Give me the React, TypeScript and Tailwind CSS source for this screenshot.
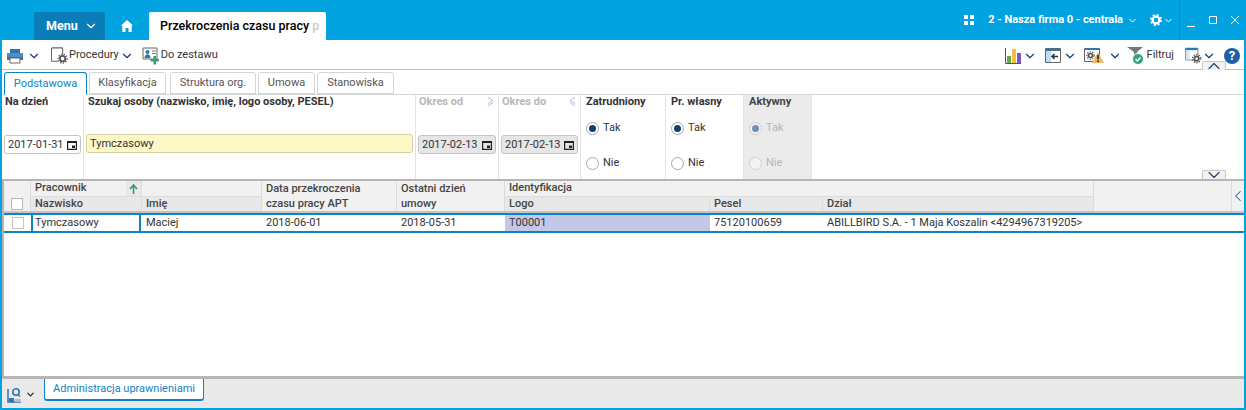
import React from "react";
import { ChevronDown, ChevronUp, ChevronLeft } from "lucide-react";

const Chev = ({ c = "text-[#1a3f6f]" }: { c?: string }) => <ChevronDown size={14} strokeWidth={2} className={`shrink-0 ${c}`} />;

const Thin = () => (
  <svg width="7" height="5" viewBox="0 0 7 5" className="shrink-0">
    <path d="M.5 1l3 3 3-3" fill="none" stroke="#fff" strokeWidth="1" />
  </svg>
);

const Cal = () => (
  <svg width="10" height="10" viewBox="0 0 10 10" className="shrink-0">
    <path d="M.6 1.500h8.800v7.900H.6z" fill="none" stroke="#222" strokeWidth="1.200" />
    <path d="M.5 1h9v2H.5z" fill="#222" />
    <path d="M5 5.500h3V8H5z" fill="#222" />
  </svg>
);

const DateBox = ({ v, off }: { v: string; off?: boolean }) => (
  <div className={`flex items-center justify-between h-[19px] rounded-[3px] border border-[#c4c4c4] pl-[3px] pr-[3px] text-[11px] whitespace-nowrap text-[#333] ${off ? "bg-[#e6e6e6]" : "bg-white"}`}>
    <span className="pt-px">{v}</span>
    <Cal />
  </div>
);

const Radio = ({ label, on, off }: { label: string; on?: boolean; off?: boolean }) => (
  <div className={`flex items-center h-[14px] gap-[4px] text-[11px] ${off ? "text-[#b5b5b5]" : "text-[#333]"}`}>
    <span className={`w-[13px] h-[13px] rounded-full border flex items-center justify-center ${off ? "border-[#d0d0d0] bg-[#f2f2f2]" : "border-[#a8a8a8] bg-white"}`}>
      {on && <span className={`w-[7px] h-[7px] rounded-full ${off ? "bg-[#6f8fb5]" : "bg-[#123f73]"}`} />}
    </span>
    {label}
  </div>
);

const Tab = ({ label, active, w, ml }: { label: string; active?: boolean; w: string; ml?: string }) => (
  <div className={`flex items-center justify-center pt-px rounded-t-[3px] border text-[11px] ${w} ${ml ?? ""} ${active ? "h-[23px] relative z-10 -mb-px border-[#0a84c6] border-b-white text-[#0a84c6] bg-white" : "h-[22px] border-[#d5d5d5] text-[#555] bg-white"}`}>
    {label}
  </div>
);

const RadioCol = ({ title, w, off }: { title: string; w: string; off?: boolean }) => (
  <div className={`${w} h-full border-r border-[#e3e3e3] pl-[5px] flex flex-col ${off ? "bg-[#ebebeb]" : ""}`}>
    <div className={`leading-[14px] h-[14px] font-bold ${off ? "text-[#444]" : "text-[#333]"}`}>{title}</div>
    <div className="mt-[12px]"><Radio label="Tak" on off={off} /></div>
    <div className="mt-[21px]"><Radio label="Nie" off={off} /></div>
  </div>
);

const Hd = ({ w, top, bottom, bg, arrow }: { w: string; top?: string; bottom?: string; bg?: string; arrow?: boolean }) => (
  <div className={`${w} shrink-0 border-r border-[#dcdcdc] flex flex-col text-[11px] font-medium text-[#444]`}>
    <div className="h-[16px] pl-[4px] flex items-center justify-between border-b border-[#dcdcdc]">
      <span>{top}</span>
      {arrow && (
        <span className="w-[15px] h-full bg-[#e8e8e8] flex items-center justify-center">
          <svg width="9" height="10" viewBox="0 0 9 10"><path d="M4.5 10V2M1 5l3.5-4L8 5" fill="none" stroke="#2a9d6b" strokeWidth="1.6" /></svg>
        </span>
      )}
    </div>
    <div className={`h-[14px] pl-[4px] pt-px flex items-center ${bg ?? ""}`}>{bottom}</div>
  </div>
);

const Cell = ({ w, children, bg }: { w: string; children?: React.ReactNode; bg?: string }) => (
  <div className={`${w} shrink-0 h-full flex items-center pl-[4px] pt-px whitespace-nowrap ${bg ?? ""}`}>{children}</div>
);

const Lbl = ({ children, right }: { children: React.ReactNode; right?: boolean }) => (
  <div className="flex justify-between items-center font-bold text-[#b8b8b8] h-[14px] leading-[14px]">
    <span>{children}</span>
    <svg width="7" height="10" viewBox="0 0 7 10" className="shrink-0">
      <path d={right ? "M6 .5 1 3.500 6 6.500" : "M1 .5 6 3.500 1 6.500"} fill="none" stroke="#a7bdd6" strokeWidth="1" />
      <path d={right ? "M1 5.500 6 9" : "M6 5.500 1 9"} fill="none" stroke="#a7bdd6" strokeWidth="1" />
    </svg>
  </div>
);

export default function App() {
  return (
    <div className="w-[1246px] h-[410px] overflow-hidden flex flex-col bg-white font-['Roboto',sans-serif] text-[#333]">
      <div className="h-[40px] shrink-0 bg-[#00a3e0] flex items-end pl-[34px] text-white">
        <div className="w-[71px] h-[28px] rounded-t-[2px] bg-[#0a7cb8] flex items-center pl-[12px] gap-[6px] text-[12.5px] font-bold">
          Menu <ChevronDown size={14} strokeWidth={2} />
        </div>
        <div className="w-[44px] h-[28px] flex items-center justify-center">
          <svg width="12" height="12" viewBox="0 0 12 12"><path d="M6 0l6 5.500h-1.300V12H7.500V8h-3v4H1.300V5.500H0z" fill="#fff" /></svg>
        </div>
        <div className="w-[177px] h-[28px] rounded-t-[2px] bg-white text-black text-[12.5px] font-medium flex items-center pl-[11px] overflow-hidden whitespace-nowrap">
          Przekroczenia czasu pracy <span className="ml-[3px] text-[#ccc]">p</span>
        </div>
        <div className="ml-auto h-[40px] flex items-center text-[11px] font-bold">
          <svg width="10" height="10" viewBox="0 0 10 10" className="mr-[14px]">
            <path d="M0 0h4v4H0zM6 0h4v4H6zM0 6h4v4H0zM6 6h4v4H6z" fill="#fff" />
          </svg>
          <span className="mr-[6px] whitespace-nowrap">2 - Nasza firma 0 - centrala</span>
          <span className="mr-[14px]"><Thin /></span>
          <svg width="12" height="12" viewBox="0 0 12 12" className="mr-[3px]">
            <circle cx="6" cy="6" r="3.400" fill="none" stroke="#fff" strokeWidth="2.200" />
            <circle cx="6" cy="6" r="5" fill="none" stroke="#fff" strokeWidth="2" strokeDasharray="2 1.930" />
          </svg>
          <span className="mr-[7px]"><Thin /></span>
          <div className="h-full border-l border-[#0a8fc6] pl-[7px] pr-[7px] flex items-center gap-[14px]">
            <svg width="8" height="8" viewBox="0 0 8 8" className="translate-y-[3px]"><path d="M0 7.500h8" stroke="#fff" strokeWidth="1" /></svg>
            <svg width="8" height="8" viewBox="0 0 8 8"><path d="M.5.500h7v7h-7z" fill="none" stroke="#fff" strokeWidth="1" /></svg>
            <svg width="8" height="8" viewBox="0 0 8 8"><path d="M0 0l8 8M8 0L0 8" stroke="#fff" strokeWidth="1" /></svg>
          </div>
        </div>
      </div>

      <div className="flex-1 flex flex-col border-l-2 border-r-2 border-b-2 border-l-[#00a3e0] border-r-[#00a3e0] border-b-[#00a3e0] min-h-0">
        <div className="h-[30px] shrink-0 border-b border-[#c0c0c0] flex items-center pt-[2px] pl-[4px] pr-[4px] text-[11px] text-[#333]">
          <svg width="18" height="16" viewBox="0 0 18 16" className="mr-[3px]">
            <path d="M4 1h10v4H4z" fill="#2e75b6" />
            <path d="M1 5h16v7H1z" fill="#4a8fc9" />
            <path d="M1 9h16v3H1z" fill="#5e6a75" />
            <path d="M4 10h10v5H4z" fill="#fff" stroke="#666" />
          </svg>
          <Chev />
          <svg width="17" height="17" viewBox="0 0 19 19" className="ml-[10px]">
            <path d="M8 16H1.500a1 1 0 0 1-1-1V2a1 1 0 0 1 1-1H12a1 1 0 0 1 1 1v6" fill="none" stroke="#666" strokeWidth="1.200" />
            <circle cx="13" cy="13" r="3" fill="none" stroke="#555" strokeWidth="2" />
            <circle cx="13" cy="13" r="5" fill="none" stroke="#555" strokeWidth="1.400" strokeDasharray="1.500 1.500" />
          </svg>
          <span className="ml-px mr-px">Procedury</span>
          <Chev />
          <svg width="18" height="18" viewBox="0 0 18 18" className="ml-[8px] mr-px">
            <path d="M1 1h14v11H1z" fill="#fff" stroke="#666" />
            <circle cx="5.500" cy="5" r="2" fill="#2e75b6" />
            <path d="M2.500 11c0-5 6-5 6 0z" fill="#2e75b6" />
            <path d="M10 4h4M10 6.500h4" stroke="#777" />
            <path d="M11.500 9h2.500v3h3v2.500h-3v3h-2.500v-3h-3V12h3z" fill="#2fa37c" />
          </svg>
          <span>Do zestawu</span>

          <div className="ml-auto flex items-center">
            <svg width="17" height="16" viewBox="0 0 17 16" className="mr-px">
              <path d="M.5 0v15.500H16" fill="none" stroke="#555" />
              <path d="M2 8h4v7H2z" fill="#6aa84f" />
              <path d="M7 1h4v14H7z" fill="#f1c232" />
              <path d="M12 5h4v10h-4z" fill="#7e57c2" />
            </svg>
            <Chev />
            <svg width="16" height="15" viewBox="0 0 16 15" className="ml-[8px] mr-[2px]">
              <path d="M.5.500h15v14H.5z" fill="#fff" stroke="#666" />
              <path d="M1 1h5v13H1z" fill="#bcdcf3" />
              <path d="M1 1h14v2H1z" fill="#2e75b6" />
              <path d="M13 8.500H7M9.500 6 7 8.500 9.500 11" fill="none" stroke="#333" strokeWidth="1.600" />
            </svg>
            <Chev />
            <svg width="21" height="17" viewBox="0 0 21 17" className="ml-[7px] mr-[3px]">
              <path d="M.5 1.500h15v13H.5z" fill="#fff" stroke="#666" />
              <path d="M1 1h14v2H1z" fill="#2e75b6" />
              <circle cx="6.500" cy="8.500" r="2" fill="none" stroke="#555" strokeWidth="1.600" />
              <circle cx="6.500" cy="8.500" r="3.600" fill="none" stroke="#555" strokeWidth="1.200" strokeDasharray="1.300 1.300" />
              <path d="M14 5l6 11H8z" fill="#f0b767" />
              <path d="M14 8v4.500M14 13.500v1.500" stroke="#222" strokeWidth="1.600" />
            </svg>
            <Chev />
            <svg width="19" height="20" viewBox="0 0 19 20" className="ml-[5px]">
              <path d="M0 1h16l-6 5v5H7V6z" fill="#777" />
              <circle cx="11" cy="13" r="5.500" fill="#2fa37c" stroke="#fff" />
              <path d="M8.500 13l2 2 3-3.500" fill="none" stroke="#fff" strokeWidth="1.500" />
            </svg>
            <span className="ml-[1px]">Filtruj</span>
            <svg width="17" height="19" viewBox="0 0 19 19" className="ml-[11px]">
              <path d="M.5 1.500h14v13H.5z" fill="#fff" stroke="#777" />
              <path d="M1 1h13v2.500H1z" fill="#2e75b6" />
              <path d="M1 4h4v10H1z" fill="#d5e6f5" />
              <circle cx="13" cy="13" r="2.500" fill="#fff" stroke="#555" strokeWidth="2" />
              <circle cx="13" cy="13" r="4.700" fill="none" stroke="#555" strokeWidth="1.400" strokeDasharray="1.500 1.500" />
            </svg>
            <Chev />
            <span className="ml-[8px] w-[16px] h-[16px] rounded-full bg-[#1f5fa8] text-white text-[13px] font-bold flex items-center justify-center">?</span>
          </div>
        </div>

        <div className="h-[24px] shrink-0 flex items-end pl-[2px] relative">
          <Tab label="Podstawowa" active w="w-[83px]" />
          <Tab label="Klasyfikacja" w="w-[77px]" ml="ml-[2px]" />
          <Tab label="Struktura org." w="w-[86px]" ml="ml-[4px]" />
          <Tab label="Umowa" w="w-[57px]" ml="ml-[2px]" />
          <Tab label="Stanowiska" w="w-[77px]" ml="ml-[2px]" />
          <div className="absolute right-[18px] top-[-9px] w-[24px] h-[9px] bg-[#f2f2f2] border border-b-0 border-[#c8c8c8] rounded-t-[2px] flex items-center justify-center">
            <ChevronUp size={20} strokeWidth={1.300} className="shrink-0 text-[#1a3f6f]" />
          </div>
        </div>

        <div className="h-[85px] shrink-0 border-t border-[#d5d5d5] flex text-[11px] relative">
          <div className="w-[82px] h-full border-r border-[#e3e3e3] px-[2px] flex flex-col">
            <div className="font-bold h-[14px] leading-[14px] pl-px">Na dzień</div>
            <div className="mt-[26px]"><DateBox v="2017-01-31" /></div>
          </div>
          <div className="w-[332px] h-full border-r border-[#e3e3e3] px-[2px] flex flex-col">
            <div className="h-[14px] leading-[14px] font-bold pl-[2px]">Szukaj osoby (nazwisko, imię, logo osoby, PESEL)</div>
            <div className="mt-[25px] h-[19px] bg-[#fdf8c8] border border-[#d5d0a0] rounded-[3px] pl-[3px] pt-px flex items-center">Tymczasowy</div>
          </div>
          <div className="w-[83px] h-full border-r border-[#e3e3e3] px-[2px] flex flex-col">
            <div className="pl-px pr-[2px]"><Lbl>Okres od</Lbl></div>
            <div className="mt-[26px]"><DateBox v="2017-02-13" off /></div>
          </div>
          <div className="w-[82px] h-full border-r border-[#e3e3e3] px-[2px] flex flex-col">
            <div className="pl-px pr-[2px]"><Lbl right>Okres do</Lbl></div>
            <div className="mt-[26px]"><DateBox v="2017-02-13" off /></div>
          </div>
          <RadioCol title="Zatrudniony" w="w-[85px]" />
          <RadioCol title="Pr. własny" w="w-[78px]" />
          <RadioCol title="Aktywny" w="w-[68px]" off />
          <div className="absolute right-[18px] bottom-0 w-[24px] h-[9px] bg-[#f2f2f2] border border-b-0 border-[#c8c8c8] rounded-t-[2px] flex items-center justify-center">
            <ChevronDown size={20} strokeWidth={1.300} className="shrink-0 text-[#1a3f6f]" />
          </div>
        </div>

        <div className="flex-1 min-h-0 flex flex-col border-t-2 border-b-[3px] border-l-2 border-[#b5b5b5]">
          <div className="h-[32px] shrink-0 bg-[#f1f1f1] border-b-2 border-[#c4c4c4] flex">
            <div className="w-[27px] shrink-0 border-r border-[#dcdcdc] flex items-end justify-center pb-[1px]">
              <span className="w-[12px] h-[12px] border border-[#b5b5b5] bg-white" />
            </div>
            <Hd w="w-[111px]" top="Pracownik" bottom="Nazwisko" arrow bg="bg-[#e8e8e8]" />
            <Hd w="w-[120px]" bottom="Imię" bg="bg-[#e8e8e8]" />
            <div className="w-[135px] shrink-0 border-r border-[#dcdcdc] flex flex-col text-[11px] font-medium text-[#444]">
              <div className="h-[16px] pl-[4px] flex items-center">Data przekroczenia</div>
              <div className="h-[14px] pl-[4px] pt-px flex items-center">czasu pracy APT</div>
            </div>
            <div className="w-[108px] shrink-0 border-r border-[#dcdcdc] flex flex-col text-[11px] font-medium text-[#444]">
              <div className="h-[16px] pl-[4px] flex items-center">Ostatni dzień</div>
              <div className="h-[14px] pl-[4px] pt-px flex items-center">umowy</div>
            </div>
            <div className="w-[589px] shrink-0 border-r border-[#dcdcdc] flex flex-col text-[11px] font-medium text-[#444]">
              <div className="h-[16px] pl-[4px] flex items-center border-b border-[#dcdcdc]">Identyfikacja</div>
              <div className="h-[14px] pt-px flex bg-[#e8e8e8]">
                <div className="w-[205px] pl-[4px] flex items-center border-r border-[#dcdcdc]">Logo</div>
                <div className="w-[113px] pl-[4px] flex items-center border-r border-[#dcdcdc]">Pesel</div>
                <div className="pl-[4px] flex items-center">Dział</div>
              </div>
            </div>
            <div className="flex-1" />
            <div className="w-[13px] border-l border-[#dcdcdc] flex items-center justify-center">
              <ChevronLeft size={18} strokeWidth={1.400} className="shrink-0 text-[#1f5fa8]" />
            </div>
          </div>
          <div className="h-[20px] shrink-0 border-y-2 border-[#0a84c6] flex items-center text-[11px] text-[#333]">
            <div className="w-[27px] shrink-0 flex justify-center"><span className="w-[12px] h-[12px] border border-[#c4c4c4]" /></div>
            <div className="w-[110px] shrink-0 h-full border-x-2 border-[#0a84c6] pl-[2px] pt-px flex items-center whitespace-nowrap">Tymczasowy</div>
            <div className="w-px shrink-0" />
            <Cell w="w-[120px]">Maciej</Cell>
            <Cell w="w-[135px]">2018-06-01</Cell>
            <Cell w="w-[108px]">2018-05-31</Cell>
            <Cell w="w-[205px]" bg="bg-[#c3c8e6]">T00001</Cell>
            <Cell w="w-[113px]">75120100659</Cell>
            <Cell w="w-[400px]">ABILLBIRD S.A. - 1 Maja Koszalin &lt;4294967319205&gt;</Cell>
          </div>
          <div className="flex-1 bg-white" />
        </div>

        <div className="h-[29px] shrink-0 bg-[#e9e9e9] flex items-start pl-[5px]">
          <svg width="16" height="16" viewBox="0 0 16 16" className="mt-[8px] mr-[2px]">
            <path d="M1 2v13h13" fill="none" stroke="#2e75b6" strokeWidth="1.500" />
            <path d="M2 11h5v4H2z" fill="#2e75b6" />
            <path d="M8 12h6v3H8z" fill="#bbb" />
            <circle cx="9" cy="5" r="3.200" fill="none" stroke="#2e75b6" strokeWidth="1.600" />
            <path d="M11 7.500l2 2" stroke="#2e75b6" strokeWidth="1.600" />
          </svg>
          <span className="mt-[10px]"><ChevronDown size={11} strokeWidth={2.500} className="text-[#222]" /></span>
          <div className="ml-[8px] h-[22px] w-[160px] bg-white border border-t-0 border-[#0a84c6] border-b-2 rounded-b-[3px] flex items-center justify-center text-[11px] text-[#0a84c6]">
            Administracja uprawnieniami
          </div>
        </div>
      </div>
    </div>
  );
}
